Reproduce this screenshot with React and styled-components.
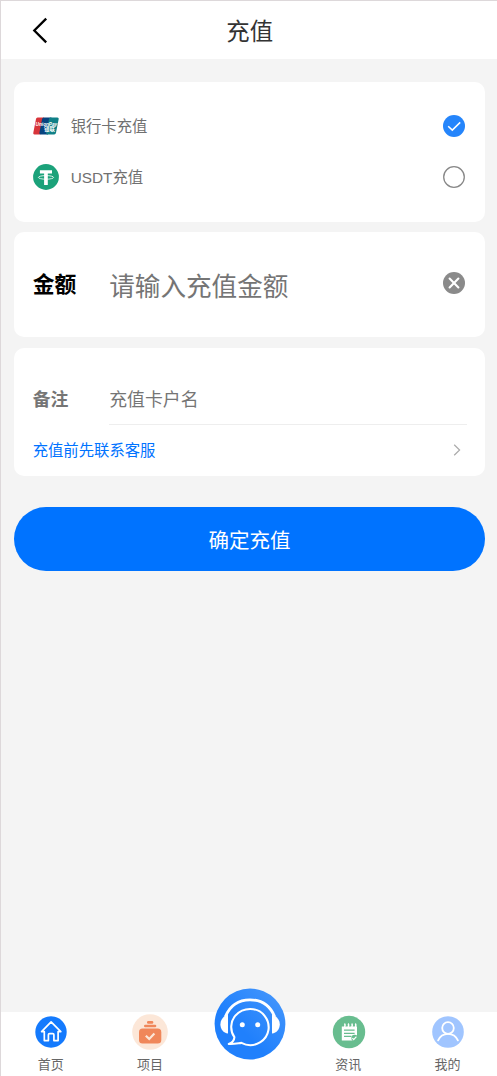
import { useState } from "react"
import styled, { createGlobalStyle } from "styled-components"

const GlobalStyle = createGlobalStyle`
  * {
    box-sizing: border-box;
  }

  body {
    margin: 0;
    background-color: #f4f4f4;
    font-family: "Liberation Sans", "Noto Sans CJK SC", sans-serif;
    color: #707070;
  }

  svg {
    flex-shrink: 0;
    overflow: visible;
  }

  button, input {
    font-family: inherit;
    border: none;
    outline: none;
    padding: 0;
    background: none;
  }
`

const BackIcon = () => (
  <svg width="16" height="27" viewBox="0 0 16 27" fill="none" stroke="#000" strokeWidth="2.3">
    <path d="M14.2 1.6 L2.3 13.5 L14.2 25.4" />
  </svg>
)

const UnionPayIcon = () => (
  <svg width="26" height="18" viewBox="0 0 26 18">
    <path d="M3.4.5H11L7.5 17.5H1.4Q-.1 17.5.3 15.8L3 2Q3.2.5 4.6.5Z" fill="#d8343a" />
    <path d="M10.2.5H18.5L15 17.5H7.6Q6.1 17.5 6.4 15.8L9.1 2Q9.3.5 10.8.5Z" fill="#07437f" />
    <path d="M17.4.5H24.4Q26 .5 25.7 2L23 15.8Q22.7 17.5 21.2 17.5H14Q12.9 17.5 13.3 15.8L16 2Q16.3.5 17.4.5Z" fill="#108087" />
    <text x="2.6" y="8.6" fill="#fff" fontSize="4.7" fontWeight="bold" fontStyle="italic">UnionPay</text>
    <text x="11" y="14.2" fill="#fff" fontSize="5.4" fontWeight="bold">银联</text>
  </svg>
)

const TetherIcon = () => (
  <svg width="26" height="26" viewBox="0 0 26 26">
    <circle cx="13" cy="13" r="12.9" fill="#1ba27a" />
    <path d="M6.9 6.2H19V9.4H14.8V21H11.1V9.4H6.9Z" fill="#fff" />
    <ellipse cx="13" cy="13.4" rx="7.6" ry="1.8" fill="none" stroke="#fff" strokeWidth="0.8" />
  </svg>
)

const CheckedIcon = () => (
  <svg width="22" height="22" viewBox="0 0 22 22" fill="none">
    <circle cx="11" cy="11" r="11" fill="#2585fb" />
    <path d="M5.2 11.2 L9.3 15.1 L17.2 7.4" stroke="#fff" strokeWidth="1.5" />
  </svg>
)

const UncheckedIcon = () => (
  <svg width="22" height="22" viewBox="0 0 22 22" fill="none">
    <circle cx="11" cy="11" r="10.3" stroke="#888" strokeWidth="1.3" />
  </svg>
)

const ClearIcon = () => (
  <svg width="22" height="22" viewBox="0 0 22 22">
    <circle cx="11" cy="11" r="11" fill="#8a8a8a" />
    <path d="M6.6 6.6 L15.4 15.4 M15.4 6.6 L6.6 15.4" stroke="#fff" strokeWidth="2.1" strokeLinecap="round" />
  </svg>
)

const ArrowIcon = () => (
  <svg width="8" height="12" viewBox="0 0 8 12" fill="none" stroke="#aaa" strokeWidth="1.2">
    <path d="M1.2.7 L6.6 6 L1.2 11.3" />
  </svg>
)

const HomeIcon = () => (
  <svg width="36" height="36" viewBox="0 0 36 36" fill="none">
    <circle cx="18" cy="18" r="15.7" fill="#147afd" />
    <path
      d="M8.6 17.6 L18.1 7.9 L27.8 17.6 H25.1 V26.6 H20.9 V20.8 Q20.9 19.6 19.7 19.6 H16.6 Q15.4 19.6 15.4 20.8 V26.6 H11.3 V17.6 Z"
      stroke="#fff"
      strokeWidth="1.7"
      strokeLinejoin="round"
    />
  </svg>
)

const ProjectIcon = () => (
  <svg width="36" height="36" viewBox="0 0 36 36" fill="none">
    <circle cx="18" cy="18" r="17.8" fill="#fce7d8" />
    <rect x="15" y="7" width="6.3" height="2.7" rx="1.2" fill="#f0875a" />
    <rect x="12" y="10.8" width="12.3" height="2.5" rx="1.2" fill="#f0875a" />
    <rect x="7" y="14.6" width="22.3" height="15" rx="3.6" fill="#f0875a" />
    <path d="M13.8 21.7 L17.2 24.9 L22.4 19.6" stroke="#fce7d8" strokeWidth="2.2" />
  </svg>
)

const NewsIcon = () => (
  <svg width="36" height="36" viewBox="0 0 36 36" fill="none">
    <circle cx="18" cy="18" r="16.2" fill="#68bd8f" />
    <path d="M10.8 12.4H26V22L22 26.4H10.8Z" fill="#fff" />
    <path d="M13.4 9.6Q14.6 10.4 13.6 13 M17 9.6Q18.2 10.4 17.2 13 M20.6 9.6Q21.8 10.4 20.8 13 M24.2 9.6Q25.4 10.4 24.4 13" stroke="#fff" strokeWidth="1.5" />
    <path d="M13 16.2H23.6 M13 19.3H23.6 M13 22.4H20.4" stroke="#68bd8f" strokeWidth="1.3" />
    <circle cx="23.6" cy="24" r="3.2" fill="#68bd8f" />
    <path d="M21.4 24.2L22.7 25.6L25.4 22.7" stroke="#fff" strokeWidth="1.2" />
  </svg>
)

const MineIcon = () => (
  <svg width="36" height="36" viewBox="0 0 36 36" fill="none" stroke="#fff" strokeLinecap="round">
    <circle cx="18" cy="18" r="15.8" fill="#a0c5ff" stroke="none" />
    <circle cx="18" cy="14" r="5.8" strokeWidth="1.8" />
    <path d="M8.1 26.4 C10 22 13.4 19.8 18 19.8 C22.6 19.8 26 22 27.9 26.4" strokeWidth="1.8" />
  </svg>
)

const ServiceIcon = () => (
  <svg width="72" height="72" viewBox="0 0 72 72" fill="none">
    <defs>
      <linearGradient id="serviceBg" x1="0" y1="1" x2="1" y2="0">
        <stop offset="0.4" stopColor="#2080fc" />
        <stop offset="1" stopColor="#4999fc" />
      </linearGradient>
    </defs>
    <circle cx="36" cy="36" r="35.4" fill="url(#serviceBg)" />
    <path d="M11.4 28.5 C16 17.5 24.5 11.8 36 11.8 C47.5 11.8 56 17.5 60.6 28.5" stroke="#fff" strokeWidth="2.8" />
    <path d="M14 27 V45.4 C9.4 45 6.4 41 6.4 36.2 C6.4 31.8 9.4 28.2 14 26 Z" fill="#fff" />
    <path d="M58 27 V45.4 C62.6 45 65.8 41 65.8 36.2 C65.8 31.8 62.6 28.2 58 26 Z" fill="#fff" />
    <path
      d="M20.4 49.2 C15.7 42.8 16.4 33.4 21.4 27.6 C29.4 18.6 43.4 18.8 50.6 27.8 C57.4 36.6 55.4 48.6 46.4 54.2 C40.4 57.8 33.4 58 27.4 54.9 C23.4 55.4 18.6 56.4 14.8 55.9 C18.2 54.6 20.2 52.4 20.4 49.2 Z"
      stroke="#fff"
      strokeWidth="2.1"
      strokeLinejoin="round"
    />
    <circle cx="28.3" cy="36.7" r="2.5" fill="#fff" />
    <circle cx="43.7" cy="36.7" r="2.5" fill="#fff" />
  </svg>
)

const methods = [
  { key: "bank", label: "银行卡充值", icon: <UnionPayIcon /> },
  { key: "usdt", label: "USDT充值", icon: <TetherIcon /> },
]

const tabs = [
  { key: "home", label: "首页", icon: <HomeIcon /> },
  { key: "project", label: "项目", icon: <ProjectIcon /> },
  { key: "service", icon: <ServiceIcon /> },
  { key: "news", label: "资讯", icon: <NewsIcon /> },
  { key: "mine", label: "我的", icon: <MineIcon /> },
]

const App = () => {
  const [method, setMethod] = useState("bank")
  const [amount, setAmount] = useState("")
  const [remark, setRemark] = useState("")

  return (
    <Page>
      <GlobalStyle />
      <Header>
        <BackButton aria-label="返回"><BackIcon /></BackButton>
        <Title>充值</Title>
      </Header>

      <Content>
        <MethodCard>
          {methods.map(({ key, label, icon }) => (
            <Method key={key} onClick={() => setMethod(key)}>
              <MethodIcon>{icon}</MethodIcon>
              <MethodName>{label}</MethodName>
              {method === key ? <CheckedIcon /> : <UncheckedIcon />}
            </Method>
          ))}
        </MethodCard>

        <AmountCard>
          <AmountLabel>金额</AmountLabel>
          <AmountInput value={amount} onChange={e => setAmount(e.target.value)} placeholder="请输入充值金额" />
          <ClearButton onClick={() => setAmount("")}><ClearIcon /></ClearButton>
        </AmountCard>

        <RemarkCard>
          <RemarkRow>
            <RemarkLabel>备注</RemarkLabel>
            <RemarkInput value={remark} onChange={e => setRemark(e.target.value)} placeholder="充值卡户名" />
          </RemarkRow>
          <ServiceLink>
            <LinkText>充值前先联系客服</LinkText>
            <ArrowIcon />
          </ServiceLink>
        </RemarkCard>

        <SubmitButton>确定充值</SubmitButton>
      </Content>

      <TabBar>
        {tabs.map(({ key, label, icon }) => (
          <Tab key={key} $raised={!label}>
            {icon}
            {label && <TabLabel>{label}</TabLabel>}
          </Tab>
        ))}
      </TabBar>
    </Page>
  )
}

export default App

const Page = styled.div`
  display: flex;
  flex-direction: column;
  height: 100vh;
  border-top: 1px solid #ddd8da;
  border-left: 1px solid #ddd8da;
`

const Header = styled.header`
  display: grid;
  grid-template-columns: 80px 1fr 80px;
  align-items: center;
  height: 58px;
  background-color: white;
`

const BackButton = styled.button`
  display: flex;
  padding-left: 31px;
`

const Title = styled.h1`
  margin: 4px 0 0 1.5px;
  font-size: 23.4px;
  font-weight: 400;
  line-height: 34px;
  text-align: center;
  color: #333;
`

const Content = styled.main`
  flex: 1;
  display: flex;
  flex-direction: column;
  gap: 10.5px;
  padding: 22.7px 11.7px 0 12.7px;
`

const Card = styled.section`
  background-color: white;
  border-radius: 10px;
`

const MethodCard = styled(Card)`
  height: 140.3px;
  padding: 19px 20px 0 19px;
`

const Method = styled.div`
  display: flex;
  align-items: center;
  height: 51px;
  cursor: pointer;
`

const MethodIcon = styled.span`
  display: flex;
  width: 38px;
`

const MethodName = styled.span`
  flex: 1;
  padding-bottom: 2px;
  font-size: 15.35px;
`

const AmountCard = styled(Card)`
  display: flex;
  align-items: center;
  height: 105px;
  padding: 0 20px 0 19px;
`

const AmountLabel = styled.label`
  width: 76.5px;
  padding-bottom: 4px;
  font-size: 21.8px;
  font-weight: 700;
  color: #000;
`

const AmountInput = styled.input`
  flex: 1;
  min-width: 0;
  height: 44px;
  padding-top: 5px;
  font-size: 25.6px;

  &::placeholder {
    color: #757575;
  }
`

const ClearButton = styled.button`
  display: flex;
  padding-bottom: 4px;
`

const RemarkCard = styled(Card)`
  height: 128px;
  padding: 25px 18px 0 19px;
`

const RemarkRow = styled.div`
  display: flex;
  align-items: center;
  height: 52px;
`

const RemarkLabel = styled.label`
  width: 76.5px;
  padding-bottom: 2px;
  font-size: 17.9px;
  font-weight: 700;
  color: #757575;
`

const RemarkInput = styled.input`
  flex: 1;
  min-width: 0;
  height: 52px;
  padding-top: 5px;
  border-bottom: 1px solid #eee;
  font-size: 17.9px;

  &::placeholder {
    color: #757575;
  }
`

const ServiceLink = styled.a`
  display: flex;
  align-items: center;
  justify-content: space-between;
  height: 50px;
  padding-right: 6px;
  font-size: 15.35px;
  color: #0073ff;
`

const LinkText = styled.span`
  padding-bottom: 2px;
`

const SubmitButton = styled.button`
  height: 64px;
  margin-top: 20.8px;
  border-radius: 32px;
  background-color: #0073ff;
  font-size: 20.5px;
  color: white;
`

const TabBar = styled.nav`
  display: grid;
  grid-template-columns: repeat(5, 1fr);
  height: 64px;
  background-color: white;
`

const Tab = styled.a`
  display: flex;
  flex-direction: column;
  align-items: center;
  padding-left: 1.2px;
  margin-top: ${({ $raised }) => $raised ? '-24px' : '1.7px'};
`

const TabLabel = styled.span`
  margin: 5px 1px 0 0;
  font-size: 13px;
  line-height: 19px;
  color: #666;
`
